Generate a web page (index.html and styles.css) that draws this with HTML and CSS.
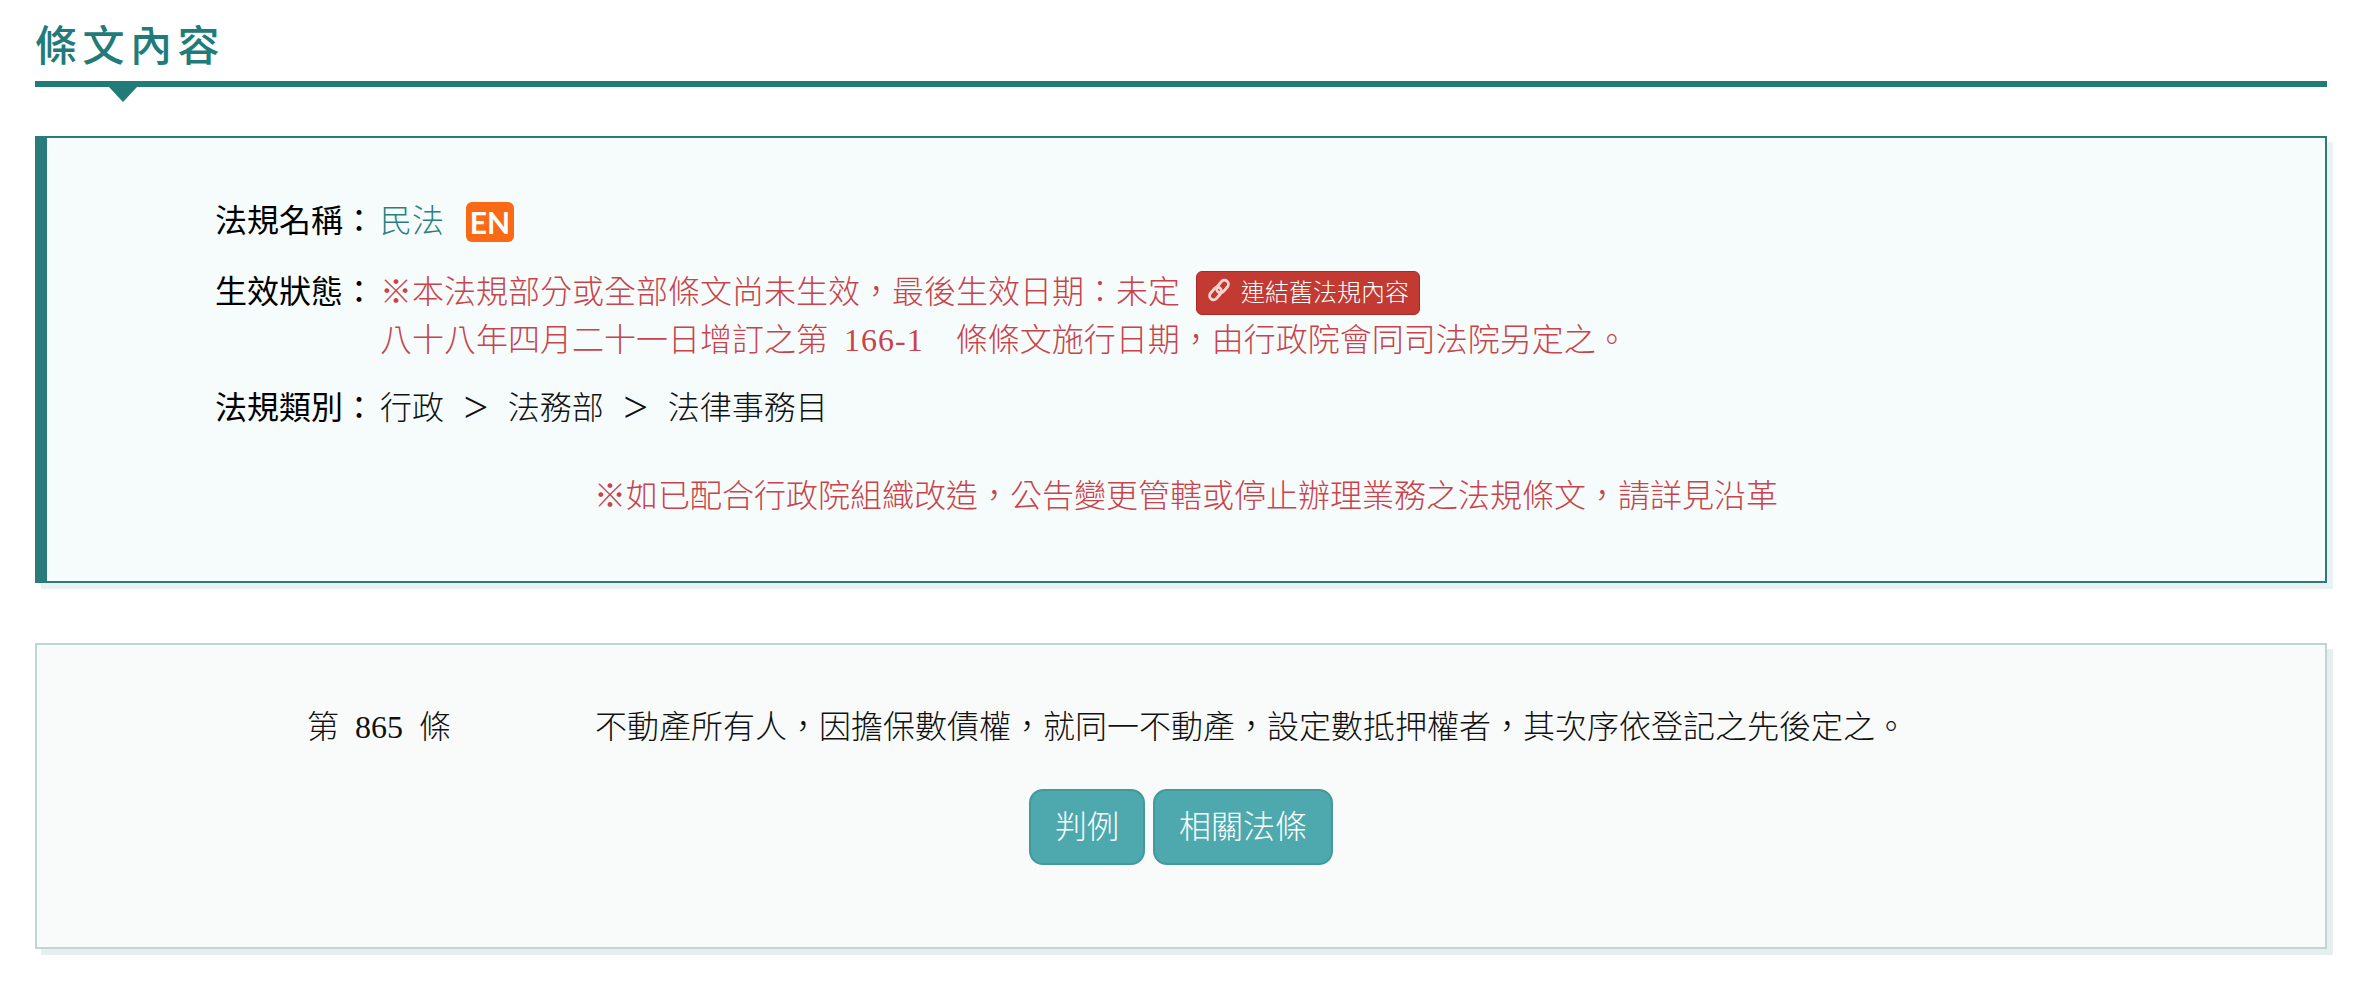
FILE: index.html
```html
<!DOCTYPE html>
<html lang="zh-Hant">
<head>
    <meta charset="UTF-8">
    <title>條文內容</title>
    <link rel="stylesheet" href="styles.css">
</head>
<body>
    <div class="page">
        <h2 class="title">條文內容</h2>

        <div class="law-info">
            <div class="info-row">
                <div class="info-label">法規名稱：</div>
                <div class="info-value">
                    <a class="law-link" href="#">民法</a>
                    <span class="badge-en">EN</span>
                </div>
            </div>
            <div class="info-row status-row">
                <div class="info-label">生效狀態：</div>
                <div class="info-value text-red">
                    <div class="status-line">
                        <span>※本法規部分或全部條文尚未生效，最後生效日期：未定</span>
                        <a class="btn-old" href="#">
                            <svg class="icon-link" viewBox="0 0 24 24" aria-hidden="true">
                                <rect x="1.5" y="11.5" width="14" height="8" rx="4" transform="rotate(-50 8.5 15.5)"></rect>
                                <rect x="8.5" y="4.5" width="14" height="8" rx="4" transform="rotate(-50 15.5 8.5)"></rect>
                            </svg>
                            連結舊法規內容
                        </a>
                    </div>
                    <div>八十八年四月二十一日增訂之第&nbsp;&nbsp;<span class="num">166-1</span>&nbsp;&nbsp;&nbsp;&nbsp;條條文施行日期，由行政院會同司法院另定之。</div>
                </div>
            </div>
            <div class="info-row">
                <div class="info-label">法規類別：</div>
                <div class="info-value">行政<span class="sep">&gt;</span>法務部<span class="sep">&gt;</span>法律事務目</div>
            </div>
            <p class="notice text-red">※如已配合行政院組織改造，公告變更管轄或停止辦理業務之法規條文，請詳見沿革</p>
        </div>

        <div class="article">
            <div class="article-row">
                <div class="article-no">第&nbsp;&nbsp;865&nbsp;&nbsp;條</div>
                <div class="article-text">不動產所有人，因擔保數債權，就同一不動產，設定數抵押權者，其次序依登記之先後定之。</div>
            </div>
            <div class="article-btns">
                <a class="btn-teal" href="#">判例</a>
                <a class="btn-teal" href="#">相關法條</a>
            </div>
        </div>
    </div>
</body>
</html>
```

FILE: styles.css
```css
body {
    margin: 0;
    background: #fff;
    color: #111;
    font-family: "Liberation Serif", "Noto Sans CJK TC", serif;
    font-size: 32px;
    font-weight: 300;
    line-height: 48px;
}

a {
    text-decoration: none;
}

.page {
    padding: 0 36px 41px 35px;
}

.title {
    position: relative;
    margin: 0 0 49px;
    padding: 13px 0 8px;
    border-bottom: 6px solid #217b79;
    color: #217b79;
    font-family: "Noto Sans CJK TC", sans-serif;
    font-size: 42px;
    font-weight: 500;
    line-height: 60px;
    letter-spacing: 5.5px;
}

.title::after {
    content: "";
    position: absolute;
    left: 74px;
    top: 100%;
    margin-top: 6px;
    border-left: 14px solid transparent;
    border-right: 14px solid transparent;
    border-top: 15px solid #217b79;
}

.law-info {
    padding: 59px 0 61px 168px;
    border: 2px solid #2a7c7a;
    border-left: 12px solid #2a7c7a;
    background: #f6fcfc;
    box-shadow: 6px 6px 0 #e9f2f1;
}

.info-row {
    display: flex;
    margin-bottom: 20px;
}

.status-row {
    margin-top: 23px;
}

.info-label {
    width: 165px;
    flex-shrink: 0;
    color: #000;
    font-weight: 400;
}

.law-link {
    color: #2a8080;
}

.badge-en {
    display: inline-block;
    margin: -5px 0 0 14px;
    width: 48px;
    height: 40px;
    border-radius: 6px;
    background: #f96a16;
    color: #fff;
    font-family: Lato, sans-serif;
    font-size: 30px;
    font-weight: 700;
    line-height: 40px;
    text-align: center;
    vertical-align: middle;
}

.text-red {
    color: #c8434a;
}

.status-line {
    display: flex;
    align-items: center;
}

.num {
    letter-spacing: 1px;
}

.btn-old {
    display: flex;
    align-items: center;
    margin: 1px 0 0 16px;
    height: 44px;
    padding: 0 10px;
    border: 1px solid #ac2925;
    border-radius: 6px;
    background: #c23a32;
    color: #fff;
    font-size: 24px;
    line-height: 42px;
    box-sizing: border-box;
}

.icon-link {
    width: 24px;
    height: 24px;
    margin: -6px 10px 0 0;
    fill: none;
    stroke: #f6d6d2;
    stroke-width: 2.8;
}

.sep {
    margin: 0 19.5px;
    font-size: 44px;
    line-height: 0;
    vertical-align: -3px;
}

.notice {
    margin: 40px 0 0 -168px;
    text-align: center;
}

.article {
    margin-top: 60px;
    padding: 58px 0 82px;
    border: 2px solid #c0d4d4;
    background: #f8fbfa;
    box-shadow: 6px 6px 0 #e6efee;
}

.article-row {
    display: flex;
    padding-left: 270px;
}

.article-no {
    width: 288px;
    flex-shrink: 0;
}

.article-btns {
    display: flex;
    justify-content: center;
    gap: 8px;
    margin-top: 38px;
}

.btn-teal {
    height: 72px;
    padding: 0 24px;
    border: 2px solid #429a9e;
    border-radius: 14px;
    background: #4da9ae;
    color: #fff;
    line-height: 72px;
}
```
